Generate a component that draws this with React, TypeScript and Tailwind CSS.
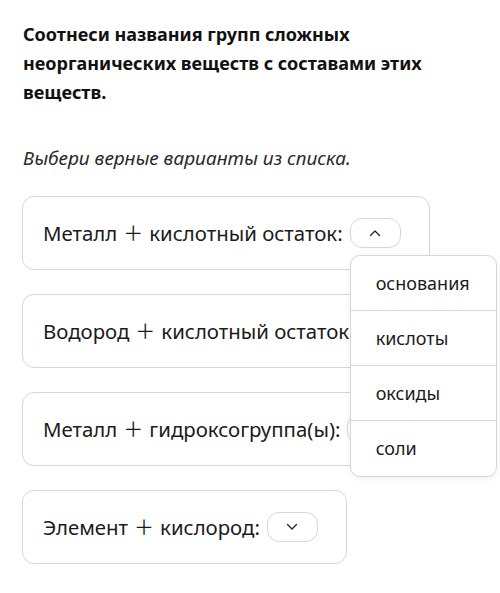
import React from "react";

const Chevron = ({ up }: { up?: boolean }) => (
  <svg width="12" height="8" viewBox="0 0 12 8" fill="none" className="text-[#222]">
    <path
      d={up ? "M1.5 6.5 L6 2 L10.5 6.5" : "M1.5 1.5 L6 6 L10.5 1.5"}
      stroke="currentColor"
      strokeWidth="1.3"
      strokeLinecap="round"
      strokeLinejoin="round"
    />
  </svg>
);

const Plus = () => (
  <span
    className="mx-[6px] text-[20px]"
    style={{ fontFamily: '"Noto Sans CJK SC", sans-serif' }}
  >
    ＋
  </span>
);

const Card = ({
  a,
  b,
  up,
  children,
}: {
  a: string;
  b: string;
  up?: boolean;
  children?: React.ReactNode;
}) => (
  <div className="relative self-start flex items-center h-[74px] pl-[20px] pr-[28px] border border-[#d6d6d6] rounded-[12px] bg-white">
    <span className="text-[20.4px] text-[#1b1b1b] whitespace-nowrap">
      {a}
      <Plus />
      {b}
    </span>
    <div className="relative ml-[7px]">
      <button className="flex items-center justify-center w-[51px] h-[30px] border border-[#d6d6d6] rounded-[12px] bg-white">
        <Chevron up={up} />
      </button>
      {children}
    </div>
  </div>
);

export default function App() {
  const items = ["основания", "кислоты", "оксиды", "соли"];
  return (
    <div
      className="w-[500px] h-[593px] bg-white overflow-hidden pl-[22px] pt-[20px]"
      style={{ fontFamily: '"Noto Sans", "Open Sans", sans-serif' }}
    >
      <h1 className="text-[18px] font-bold leading-[29px] text-[#111] pl-[1px] w-[420px]">
        Соотнеси названия групп сложных неорганических веществ с составами этих веществ.
      </h1>
      <p className="mt-[37px] text-[19px] italic leading-[29px] text-[#2a2a2a] pl-[1px]">
        Выбери верные варианты из списка.
      </p>
      <div className="mt-[23px] flex flex-col gap-[24px]">
        <Card a="Металл" b="кислотный остаток:" up>
          <div className="absolute left-0 top-[37px] w-[147px] bg-white border border-[#d6d6d6] rounded-[10px] shadow-[0_2px_6px_rgba(0,0,0,0.06)] z-10 overflow-hidden">
            {items.map((t, i) => (
              <div
                key={t}
                className={`h-[55px] flex items-center pl-[25px] text-[18px] text-[#1b1b1b] ${
                  i < items.length - 1 ? "border-b border-[#d6d6d6]" : ""
                }`}
              >
                {t}
              </div>
            ))}
          </div>
        </Card>
        <Card a="Водород" b="кислотный остаток:" />
        <Card a="Металл" b="гидроксогруппа(ы):" />
        <Card a="Элемент" b="кислород:" />
      </div>
    </div>
  );
}
